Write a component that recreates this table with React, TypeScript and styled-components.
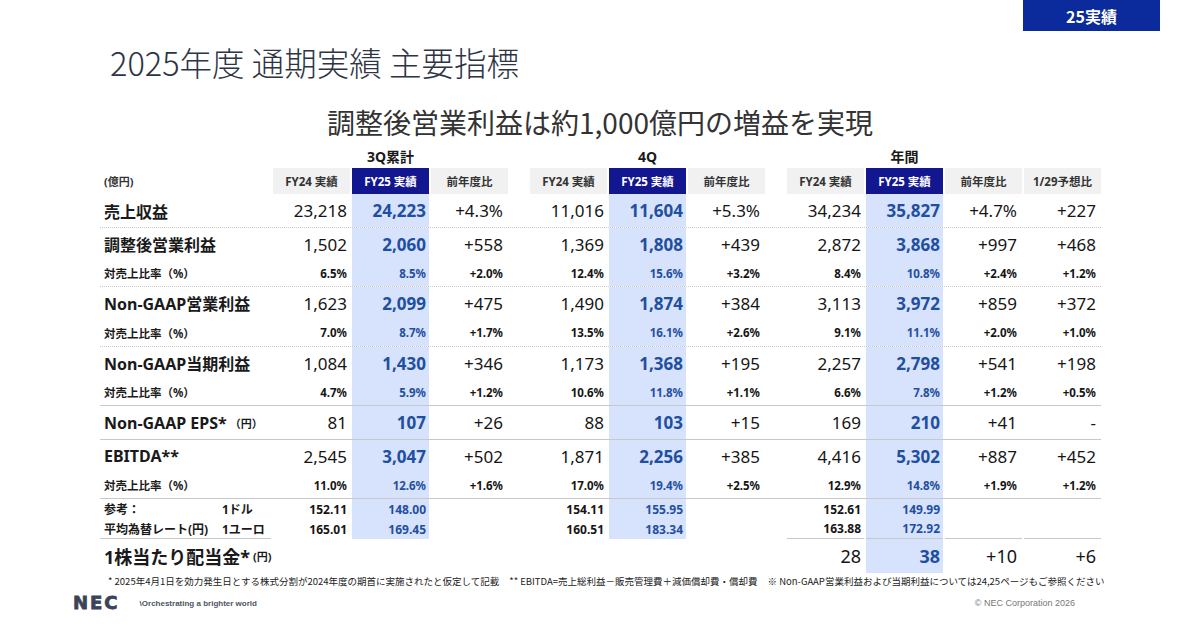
import React from 'react';
import styled, { createGlobalStyle, css } from 'styled-components';

const GlobalStyle = createGlobalStyle`
  html, body {
    margin: 0;
    padding: 0;
    background: #ffffff;
  }
  body {
    font-family: 'Noto Sans', 'Noto Sans CJK JP', sans-serif;
    color: #1a1a1a;
  }
`;

const COLS = '171px repeat(3, 77px) 18px repeat(3, 77px) 18px repeat(4, 77px)';
const BLUE_BG = '#d7e2fc';
const BLUE_TEXT = '#1f4f9f';

type Line = 'none' | 'dotted' | 'solid';
type Size = 'main' | 'sub' | 'ref' | 'div';

const Page = styled.div`
  width: 1200px;
  height: 630px;
  display: flex;
  flex-direction: column;
  overflow: hidden;
`;

const TopBar = styled.div`
  display: flex;
  justify-content: flex-end;
  padding-right: 40px;
`;

const Badge = styled.div`
  width: 137px;
  height: 31px;
  background: #0b2a9b;
  color: #ffffff;
  font-family: 'Noto Sans CJK JP', sans-serif;
  font-weight: 700;
  font-size: 16px;
  display: flex;
  align-items: center;
  justify-content: center;
`;

const Title = styled.h1`
  margin: 12px 0 0 110px;
  font-family: 'Noto Sans CJK JP', sans-serif;
  font-weight: 300;
  font-size: 32.5px;
  line-height: 38px;
  color: #2d3545;
`;

const Subtitle = styled.h2`
  margin: 24px 0 0;
  text-align: center;
  font-family: 'Noto Sans CJK JP', sans-serif;
  font-weight: 400;
  font-size: 28px;
  line-height: 34px;
  color: #333333;
`;

const Table = styled.div`
  margin: 5px 0 0 100px;
  width: 1001px;
`;

const Row = styled.div<{ $h: number; $line?: Line }>`
  display: grid;
  grid-template-columns: ${COLS};
  column-gap: 2px;
  height: ${(p) => p.$h}px;
  box-sizing: border-box;
  ${(p) =>
    p.$line === 'dotted' &&
    css`
      border-bottom: 1px dotted #c8c8c8;
    `}
  ${(p) =>
    p.$line === 'solid' &&
    css`
      border-bottom: 1px solid #c8c8c8;
    `}
`;

const GroupTitle = styled.div<{ $start: number; $span: number }>`
  grid-column: ${(p) => p.$start} / span ${(p) => p.$span};
  display: flex;
  align-items: center;
  justify-content: center;
  font-weight: 700;
  font-size: 14px;
  color: #1a1a1a;
`;

const HeadCell = styled.div<{ $kind: 'gray' | 'dark' | 'unit' | 'none' }>`
  display: flex;
  align-items: center;
  justify-content: center;
  font-weight: 700;
  font-size: 11.5px;
  color: #333333;
  ${(p) =>
    p.$kind === 'gray' &&
    css`
      background: #f1f1f1;
    `}
  ${(p) =>
    p.$kind === 'dark' &&
    css`
      background: #12178f;
      color: #ffffff;
    `}
  ${(p) =>
    p.$kind === 'unit' &&
    css`
      justify-content: flex-start;
      padding-left: 4px;
      font-size: 11px;
    `}
`;

const sizeStyles: Record<Size, string> = {
  main: 'font-size: 17px; font-weight: 400;',
  sub: 'font-size: 11.5px; font-weight: 700;',
  ref: 'font-size: 12px; font-weight: 700;',
  div: 'font-size: 18px; font-weight: 400;',
};

const Num = styled.div<{ $blue?: boolean; $size: Size; $delta?: boolean; $line?: boolean }>`
  display: flex;
  align-items: center;
  justify-content: flex-end;
  padding-right: ${(p) => (p.$delta ? 5 : 3)}px;
  ${(p) => sizeStyles[p.$size]}
  color: #151515;
  ${(p) =>
    p.$blue &&
    css`
      background: ${BLUE_BG};
      color: ${BLUE_TEXT};
      font-weight: 700;
    `}
  ${(p) =>
    p.$line &&
    css`
      border-bottom: 1px solid #c8c8c8;
    `}
`;

const Spacer = styled.div``;

const Label = styled.div<{ $size: Size; $line?: boolean }>`
  display: flex;
  align-items: center;
  padding-left: 4px;
  font-weight: 700;
  color: #1a1a1a;
  white-space: nowrap;
  font-size: ${(p) =>
    p.$size === 'main' ? 16 : p.$size === 'div' ? 18 : p.$size === 'ref' ? 12 : 11.5}px;
  ${(p) =>
    p.$line &&
    css`
      border-bottom: 1px solid #c8c8c8;
    `}
`;

const Unit = styled.span`
  font-size: 11px;
  margin-left: 3px;
`;

const RefKey = styled.span`
  width: 118px;
`;

const Footnote = styled.div`
  margin: 2px 0 0 108px;
  height: 12px;
  display: flex;
  gap: 10px;
  align-items: center;
  font-family: 'Noto Sans CJK JP', sans-serif;
  font-size: 9.5px;
  color: #222222;
  white-space: nowrap;
`;

const Footer = styled.div`
  margin: 8px 0 0 73px;
  width: 1002px;
  height: 16px;
  display: flex;
  align-items: center;
`;

const Logo = styled.span`
  font-family: 'DejaVu Sans', sans-serif;
  font-weight: 700;
  font-size: 18px;
  letter-spacing: 2px;
  color: #3b4358;
  -webkit-text-stroke: 0.8px #3b4358;
  line-height: 16px;
`;

const Tagline = styled.span`
  margin-left: 20px;
  font-family: 'Liberation Sans', sans-serif;
  font-weight: 700;
  font-size: 8px;
  color: #4d5465;
`;

const Copyright = styled.span`
  margin-left: auto;
  font-family: 'Liberation Sans', sans-serif;
  font-size: 9px;
  color: #777777;
`;

type Values = string[];
interface DataRowSpec {
  label: React.ReactNode;
  size: Size;
  h: number;
  line?: Line;
  q3: Values;
  q4: Values;
  yr: Values;
  plainQuarters?: boolean;
  partialLine?: boolean;
}

const rows: DataRowSpec[] = [
  { label: '売上収益', size: 'main', h: 34, line: 'dotted', q3: ['23,218', '24,223', '+4.3%'], q4: ['11,016', '11,604', '+5.3%'], yr: ['34,234', '35,827', '+4.7%', '+227'] },
  { label: '調整後営業利益', size: 'main', h: 32, q3: ['1,502', '2,060', '+558'], q4: ['1,369', '1,808', '+439'], yr: ['2,872', '3,868', '+997', '+468'] },
  { label: '対売上比率（%）', size: 'sub', h: 27, line: 'dotted', q3: ['6.5%', '8.5%', '+2.0%'], q4: ['12.4%', '15.6%', '+3.2%'], yr: ['8.4%', '10.8%', '+2.4%', '+1.2%'] },
  { label: 'Non-GAAP営業利益', size: 'main', h: 32, q3: ['1,623', '2,099', '+475'], q4: ['1,490', '1,874', '+384'], yr: ['3,113', '3,972', '+859', '+372'] },
  { label: '対売上比率（%）', size: 'sub', h: 28, line: 'dotted', q3: ['7.0%', '8.7%', '+1.7%'], q4: ['13.5%', '16.1%', '+2.6%'], yr: ['9.1%', '11.1%', '+2.0%', '+1.0%'] },
  { label: 'Non-GAAP当期利益', size: 'main', h: 32, q3: ['1,084', '1,430', '+346'], q4: ['1,173', '1,368', '+195'], yr: ['2,257', '2,798', '+541', '+198'] },
  { label: '対売上比率（%）', size: 'sub', h: 27, line: 'solid', q3: ['4.7%', '5.9%', '+1.2%'], q4: ['10.6%', '11.8%', '+1.1%'], yr: ['6.6%', '7.8%', '+1.2%', '+0.5%'] },
  {
    label: (
      <>
        Non-GAAP EPS*<Unit>（円）</Unit>
      </>
    ),
    size: 'main', h: 34, line: 'solid', q3: ['81', '107', '+26'], q4: ['88', '103', '+15'], yr: ['169', '210', '+41', '-'],
  },
  { label: 'EBITDA**', size: 'main', h: 32, q3: ['2,545', '3,047', '+502'], q4: ['1,871', '2,256', '+385'], yr: ['4,416', '5,302', '+887', '+452'] },
  { label: '対売上比率（%）', size: 'sub', h: 27, line: 'solid', q3: ['11.0%', '12.6%', '+1.6%'], q4: ['17.0%', '19.4%', '+2.5%'], yr: ['12.9%', '14.8%', '+1.9%', '+1.2%'] },
  {
    label: (
      <>
        <RefKey>参考：</RefKey>1ドル
      </>
    ),
    size: 'ref', h: 20, q3: ['152.11', '148.00', ''], q4: ['154.11', '155.95', ''], yr: ['152.61', '149.99', '', ''],
  },
  {
    label: (
      <>
        <RefKey>平均為替レート(円)</RefKey>1ユーロ
      </>
    ),
    size: 'ref', h: 20, partialLine: true, q3: ['165.01', '169.45', ''], q4: ['160.51', '183.34', ''], yr: ['163.88', '172.92', '', ''],
  },
  {
    label: (
      <>
        1株当たり配当金*<Unit>(円)</Unit>
      </>
    ),
    size: 'div', h: 34, plainQuarters: true, q3: ['', '', ''], q4: ['', '', ''], yr: ['28', '38', '+10', '+6'],
  },
];

const DataRow: React.FC<{ spec: DataRowSpec }> = ({ spec }) => {
  const group = (values: Values, key: string, plain: boolean, line: boolean) =>
    values.map((v, i) => (
      <Num
        key={`${key}${i}`}
        $size={spec.size}
        $blue={i === 1 && !plain}
        $delta={i >= 2}
        $line={line}
      >
        {v}
      </Num>
    ));

  return (
    <Row $h={spec.h} $line={spec.line}>
      <Label $size={spec.size} $line={spec.partialLine}>
        {spec.label}
      </Label>
      {group(spec.q3, 'a', !!spec.plainQuarters, false)}
      <Spacer />
      {group(spec.q4, 'b', !!spec.plainQuarters, false)}
      <Spacer />
      {group(spec.yr, 'c', false, !!spec.partialLine)}
    </Row>
  );
};

const headerKinds = ['gray', 'dark', 'gray'] as const;
const headerTexts = ['FY24 実績', 'FY25 実績', '前年度比'];

const App: React.FC = () => {
  return (
    <Page>
      <GlobalStyle />
      <TopBar>
        <Badge>25実績</Badge>
      </TopBar>
      <Title>2025年度 通期実績 主要指標</Title>
      <Subtitle>調整後営業利益は約1,000億円の増益を実現</Subtitle>

      <Table>
        <Row $h={24}>
          <GroupTitle $start={2} $span={3}>3Q累計</GroupTitle>
          <GroupTitle $start={6} $span={3}>4Q</GroupTitle>
          <GroupTitle $start={10} $span={3}>年間</GroupTitle>
        </Row>
        <Row $h={26}>
          <HeadCell $kind="unit">(億円)</HeadCell>
          {headerTexts.map((t, i) => (
            <HeadCell key={`a${i}`} $kind={headerKinds[i]}>{t}</HeadCell>
          ))}
          <Spacer />
          {headerTexts.map((t, i) => (
            <HeadCell key={`b${i}`} $kind={headerKinds[i]}>{t}</HeadCell>
          ))}
          <Spacer />
          {headerTexts.map((t, i) => (
            <HeadCell key={`c${i}`} $kind={headerKinds[i]}>{t}</HeadCell>
          ))}
          <HeadCell $kind="gray">1/29予想比</HeadCell>
        </Row>
        {rows.map((r, i) => (
          <DataRow key={i} spec={r} />
        ))}
      </Table>

      <Footnote>
        <span>* 2025年4月1日を効力発生日とする株式分割が2024年度の期首に実施されたと仮定して記載</span>
        <span>** EBITDA=売上総利益－販売管理費＋減価償却費・償却費</span>
        <span>※ Non-GAAP営業利益および当期利益については24,25ページもご参照ください</span>
      </Footnote>

      <Footer>
        <Logo>NEC</Logo>
        <Tagline>\Orchestrating a brighter world</Tagline>
        <Copyright>© NEC Corporation 2026</Copyright>
      </Footer>
    </Page>
  );
};

export default App;
